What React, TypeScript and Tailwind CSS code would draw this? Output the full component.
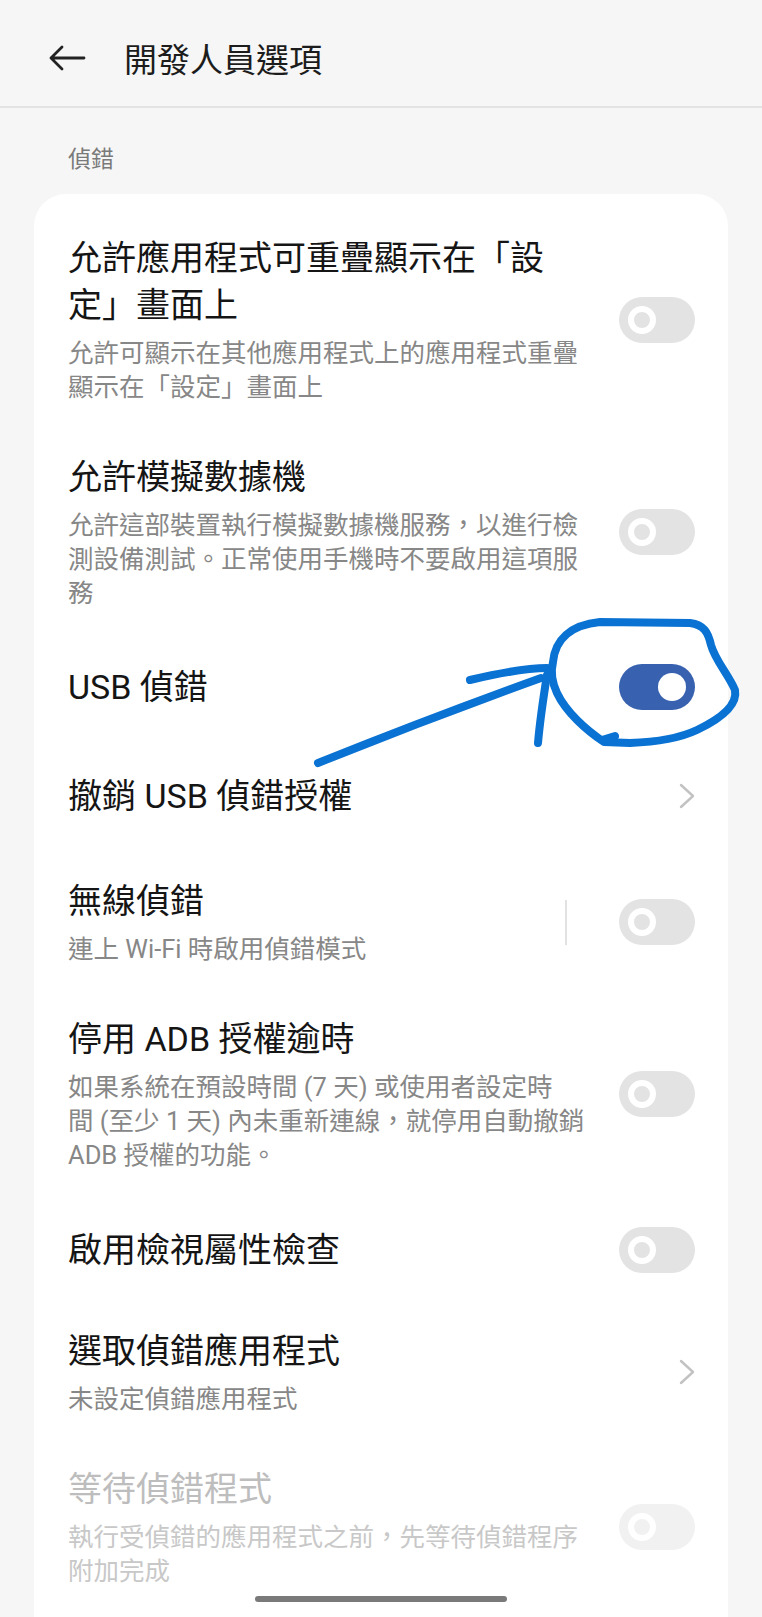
import React from 'react';

type Control = 'off' | 'on' | 'disabled' | 'chevron' | 'divider-off';

type Item = {
  title: string[];
  sub?: string[];
  control: Control;
  disabled?: boolean;
  minH?: string;
};

const items: Item[] = [
  {
    title: ['允許應用程式可重疊顯示在「設', '定」畫面上'],
    sub: ['允許可顯示在其他應用程式上的應用程式重疊', '顯示在「設定」畫面上'],
    control: 'off',
  },
  {
    title: ['允許模擬數據機'],
    sub: ['允許這部裝置執行模擬數據機服務，以進行檢', '測設備測試。正常使用手機時不要啟用這項服', '務'],
    control: 'off',
  },
  { title: ['USB 偵錯'], control: 'on', minH: 'min-h-[104px]' },
  { title: ['撤銷 USB 偵錯授權'], control: 'chevron', minH: 'min-h-[114px]' },
  {
    title: ['無線偵錯'],
    sub: ['連上 Wi-Fi 時啟用偵錯模式'],
    control: 'divider-off',
  },
  {
    title: ['停用 ADB 授權逾時'],
    sub: ['如果系統在預設時間 (7 天) 或使用者設定時', '間 (至少 1 天) 內未重新連線，就停用自動撤銷', 'ADB 授權的功能。'],
    control: 'off',
  },
  { title: ['啟用檢視屬性檢查'], control: 'off', minH: 'min-h-[106px]' },
  {
    title: ['選取偵錯應用程式'],
    sub: ['未設定偵錯應用程式'],
    control: 'chevron',
  },
  {
    title: ['等待偵錯程式'],
    sub: ['執行受偵錯的應用程式之前，先等待偵錯程序', '附加完成'],
    control: 'disabled',
    disabled: true,
  },
];

function Toggle({ state }: { state: 'off' | 'on' | 'disabled' }) {
  if (state === 'on') {
    return (
      <div className="relative h-[46px] w-[76px] shrink-0 rounded-full bg-[#3862b0]">
        <div className="absolute right-[9px] top-[9px] h-[28px] w-[28px] rounded-full bg-white" />
      </div>
    );
  }
  const track = state === 'disabled' ? 'bg-[#f1f1f1]' : 'bg-[#e3e3e3]';
  return (
    <div className={`relative h-[46px] w-[76px] shrink-0 rounded-full ${track}`}>
      <div className="absolute left-[9px] top-[9px] h-[28px] w-[28px] rounded-full border-[6px] border-white" />
    </div>
  );
}

function Chevron() {
  return (
    <svg width="16" height="26" viewBox="0 0 16 26" fill="none" className="shrink-0">
      <path d="M2 2 L14 13 L2 24" stroke="#c2c2c2" strokeWidth="2.4" strokeLinecap="round" strokeLinejoin="round" />
    </svg>
  );
}

function Row({ item }: { item: Item }) {
  const titleColor = item.disabled ? 'text-[#bdbdbd]' : 'text-[#151515]';
  const subColor = item.disabled ? 'text-[#c8c8c8]' : 'text-[#878787]';
  return (
    <div className={`flex items-center justify-between py-[25px] ${item.minH ?? ''}`}>
      <div className="whitespace-nowrap">
        <div className={`text-[34px] leading-[47px] ${titleColor}`}>
          {item.title.map((t, i) => (
            <div key={i}>{t}</div>
          ))}
        </div>
        {item.sub && (
          <div className={`mt-[7px] text-[25.5px] leading-[34px] ${subColor}`}>
            {item.sub.map((t, i) => (
              <div key={i}>{t}</div>
            ))}
          </div>
        )}
      </div>
      {item.control === 'chevron' && <Chevron />}
      {item.control === 'on' && <Toggle state="on" />}
      {item.control === 'off' && <Toggle state="off" />}
      {item.control === 'disabled' && <Toggle state="disabled" />}
      {item.control === 'divider-off' && (
        <div className="flex items-center gap-[52px]">
          <div className="h-[45px] w-[2px] bg-[#e2e2e2]" />
          <Toggle state="off" />
        </div>
      )}
    </div>
  );
}

export default function App() {
  return (
    <div
      lang="zh-Hant"
      className="relative h-[1617px] w-[762px] overflow-hidden bg-[#f6f6f6]"
      style={{ fontFamily: 'Roboto, "Noto Sans CJK TC", sans-serif' }}
    >
      {/* Header */}
      <div className="flex h-[108px] items-center border-b-2 border-[#e3e3e3] pl-[48px] pt-[10px]">
        <svg width="38" height="26" viewBox="0 0 38 26" fill="none">
          <path d="M36 13 H3 M14 2 L3 13 L14 24" stroke="#222" strokeWidth="2.8" strokeLinecap="round" strokeLinejoin="round" />
        </svg>
        <h1 className="ml-[38px] mt-[6px] text-[33px] leading-[44px] text-[#1c1c1c]">開發人員選項</h1>
      </div>

      {/* Section */}
      <div className="mt-[37px] pl-[68px] text-[23px] leading-[30px] text-[#7a7a7a]">偵錯</div>

      <div className="mx-[34px] mt-[19px] rounded-[32px] bg-white pb-[40px] pl-[34px] pr-[33px] pt-[16px]">
        {items.map((item, i) => (
          <Row key={i} item={item} />
        ))}
      </div>

      {/* Hand-drawn annotation */}
      <svg
        className="pointer-events-none absolute left-0 top-0"
        width="762"
        height="1617"
        viewBox="0 0 762 1617"
        fill="none"
      >
        <g stroke="#0a72d2" strokeWidth="8" strokeLinecap="round" strokeLinejoin="round">
          <path d="M553 662 C 555 640, 570 625, 600 622 L 690 623 C 704 625, 708 632, 711 645 C 715 660, 728 674, 735 690 C 738 706, 720 719, 697 730 C 680 738, 660 742, 630 743 L 604 742 C 586 730, 566 712, 557 693 C 551 680, 551 670, 553 662" />
          <path d="M602 740 L 615 736" />
          <path d="M318 763 Q 430 718, 541 678" />
          <path d="M470 680 C 500 673, 525 668, 547 668" />
          <path d="M547 675 C 543 700, 540 720, 538 743" />
        </g>
      </svg>

      {/* Home indicator */}
      <div className="absolute bottom-[15px] left-[255px] h-[6px] w-[252px] rounded-full bg-[#7a7a7a]" />
    </div>
  );
}
